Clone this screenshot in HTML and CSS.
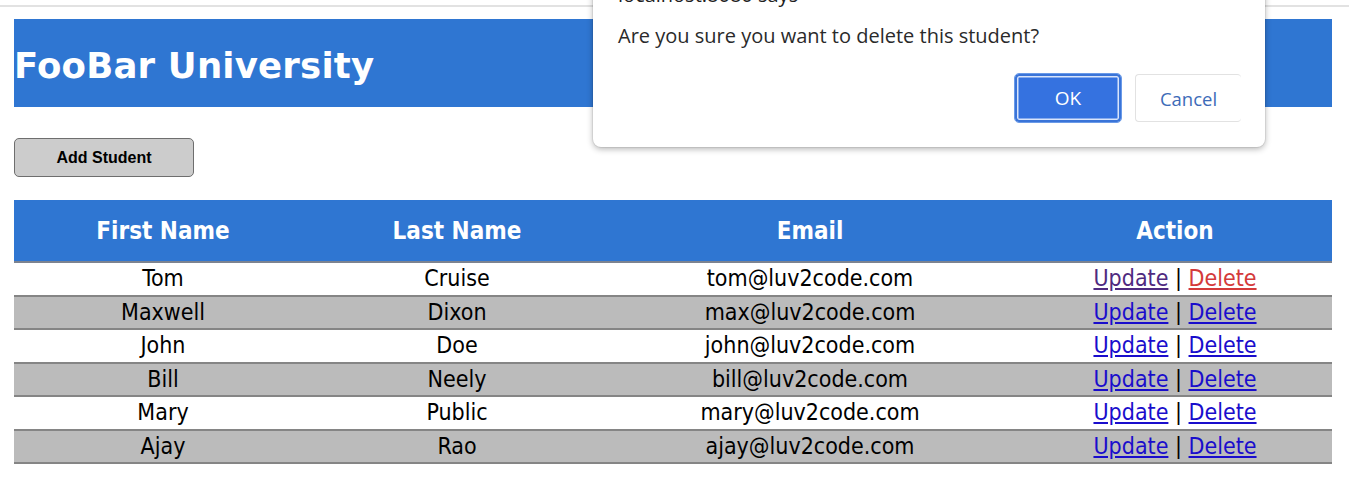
FILE: index.html
```html
<!DOCTYPE html>
<html>
<head>
<meta charset="utf-8">
<title>FooBar University</title>
<link rel="stylesheet" href="styles.css">
</head>
<body>
<div class="topline"></div>
<div class="page">
  <div class="header"><h1>FooBar University</h1></div>
  <button class="add-btn">Add Student</button>
  <table class="students">
    <thead>
      <tr><th class="c1">First Name</th><th class="c2">Last Name</th><th class="c3">Email</th><th class="c4">Action</th></tr>
    </thead>
    <tbody>
      <tr><td>Tom</td><td>Cruise</td><td>tom@luv2code.com</td><td><a class="visited" href="#">Update</a> | <a class="active" href="#">Delete</a></td></tr>
      <tr><td>Maxwell</td><td>Dixon</td><td>max@luv2code.com</td><td><a href="#">Update</a> | <a href="#">Delete</a></td></tr>
      <tr><td>John</td><td>Doe</td><td>john@luv2code.com</td><td><a href="#">Update</a> | <a href="#">Delete</a></td></tr>
      <tr><td>Bill</td><td>Neely</td><td>bill@luv2code.com</td><td><a href="#">Update</a> | <a href="#">Delete</a></td></tr>
      <tr><td>Mary</td><td>Public</td><td>mary@luv2code.com</td><td><a href="#">Update</a> | <a href="#">Delete</a></td></tr>
      <tr><td>Ajay</td><td>Rao</td><td>ajay@luv2code.com</td><td><a href="#">Update</a> | <a href="#">Delete</a></td></tr>
    </tbody>
  </table>
</div>
<div class="dialog">
  <div class="dlg-title">localhost:8080 says</div>
  <div class="dlg-msg">Are you sure you want to delete this student?</div>
  <div class="dlg-actions">
    <button class="dlg-ok">OK</button>
    <button class="dlg-cancel">Cancel</button>
  </div>
</div>
</body>
</html>
```
FILE: styles.css
```css
html, body {
  margin: 0;
  padding: 0;
  background: #fff;
}
body {
  font-family: "DejaVu Sans Condensed", "DejaVu Sans", sans-serif;
}
.topline {
  height: 5px;
  border-bottom: 2px solid #e2e2e2;
}
.page {
  padding: 12px 17px 0 14px;
}
.header {
  background: #2f76d2;
  height: 88px;
  display: flex;
  align-items: center;
}
.header h1 {
  margin: 0;
  color: #fff;
  font-family: "DejaVu Sans", sans-serif;
  font-weight: bold;
  font-size: 35.5px;
  letter-spacing: 0.2px;
  padding-top: 4px;
}
.add-btn {
  display: block;
  margin-top: 31px;
  width: 180px;
  height: 39px;
  background: #cccccc;
  border: 1px solid #6e6e6e;
  border-radius: 5px;
  font-family: "Liberation Sans", Arial, sans-serif;
  font-weight: bold;
  font-size: 16px;
  color: #000;
  padding: 0;
}
.students {
  margin-top: 23px;
  width: 100%;
  border-collapse: collapse;
  font-size: 23px;
}
.students th {
  background: #2f76d2;
  color: #fff;
  height: 61px;
  font-weight: bold;
  font-size: 24px;
  padding: 0;
  border-bottom: 2px solid #7c8390;
}
.students th.c1 { width: 298px; }
.students th.c2 { width: 290px; }
.students th.c3 { width: 416px; }
.students td {
  text-align: center;
  height: 31.5px;
  padding: 0;
  line-height: 31.5px;
  color: #000;
  border-bottom: 2px solid #858585;
}
.students tbody tr:nth-child(even) td {
  background: #bbbbbb;
}
.students a {
  color: #1a0dcc;
  text-decoration: underline;
}
.students a.visited { color: #4f2a80; }
.students a.active { color: #d43a3a; }
.dialog {
  position: absolute;
  left: 593px;
  top: -30px;
  width: 672px;
  height: 177px;
  background: #fff;
  border-radius: 8px;
  box-shadow: 0 2px 6px rgba(0,0,0,0.3), 0 0 0 1px rgba(0,0,0,0.06);
  box-sizing: border-box;
  padding: 0 24px 0 25px;
  font-family: "Open Sans", "Noto Sans", sans-serif;
  color: #202020;
}
.dlg-title {
  font-size: 20px;
  line-height: 28px;
  margin-top: 11px;
  height: 28px;
}
.dlg-msg {
  font-size: 20px;
  line-height: 28px;
  margin-top: 13px;
  height: 28px;
  color: #2a2a2a;
}
.dlg-actions {
  display: flex;
  justify-content: flex-end;
  gap: 14px;
  margin-top: 24px;
}
.dlg-ok {
  width: 106px;
  height: 48px;
  background: #3572e0;
  color: #fff;
  border: 2px solid #3a74d8;
  border-radius: 4px;
  box-shadow: inset 0 0 0 1.5px #d8e4fb;
  font-family: "Open Sans", "Noto Sans", sans-serif;
  font-size: 19px;
  outline: 1px solid #6a9ae8;
}
.dlg-cancel {
  width: 106px;
  height: 48px;
  background: #fff;
  color: #3d6bb8;
  border: 1px solid #e2e2e2;
  border-right: none;
  border-radius: 4px;
  font-family: "Open Sans", "Noto Sans", sans-serif;
  font-size: 18.5px;
}
```
